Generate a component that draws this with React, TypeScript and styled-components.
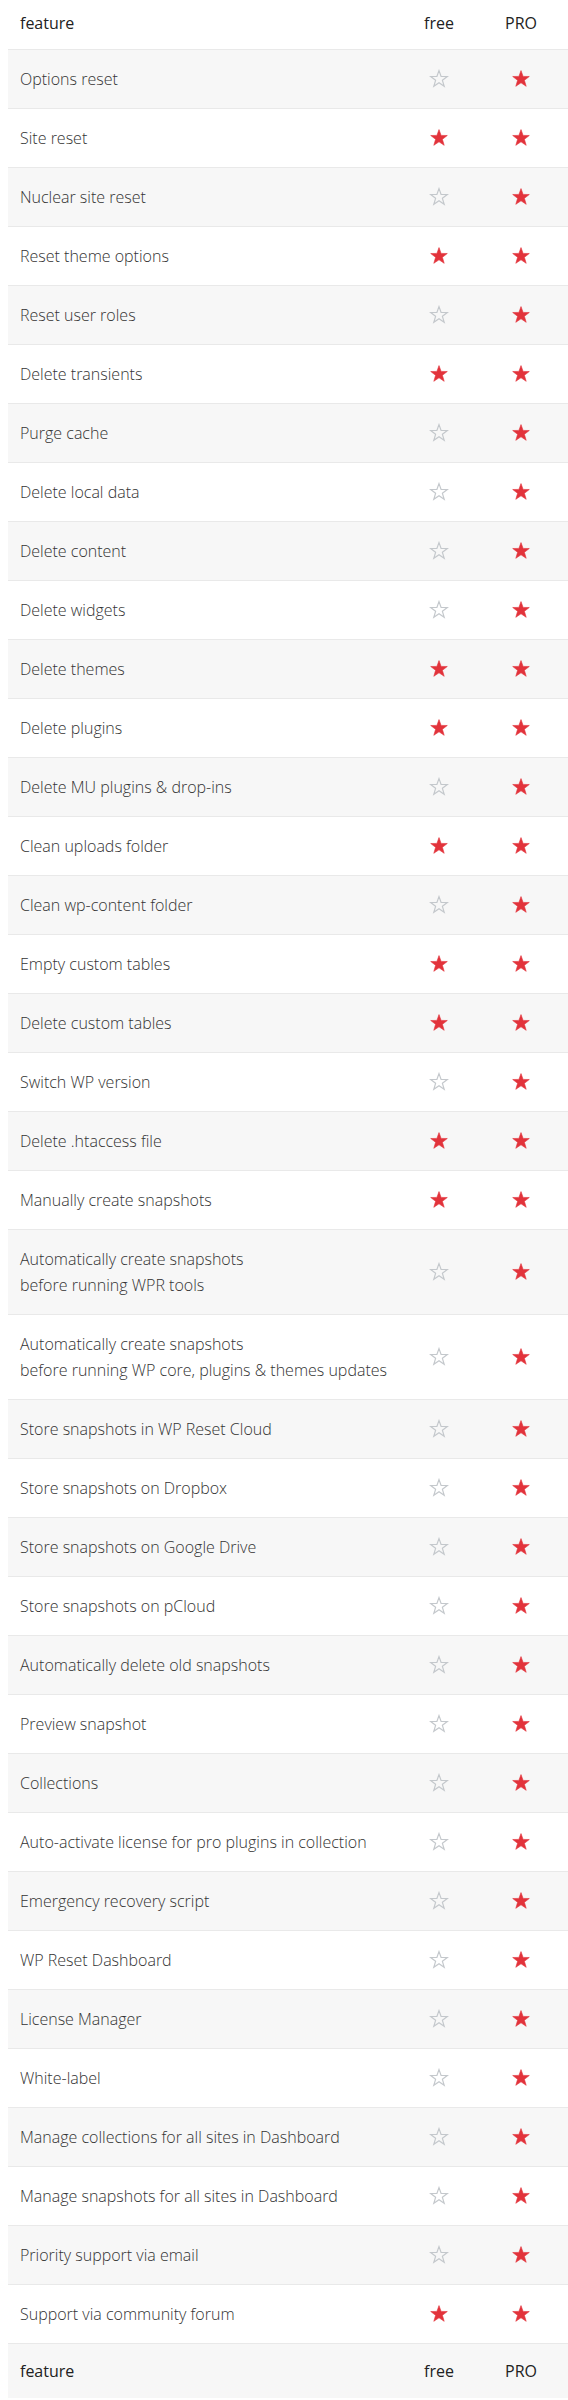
import React from "react";
import styled, { createGlobalStyle } from "styled-components";

const Global = createGlobalStyle`
  html, body { margin: 0; padding: 0; background: #ffffff; }
  body { font-family: "Open Sans", "Liberation Sans", sans-serif; color: #333333; }
`;

const Table = styled.div`
  margin-left: 8px;
  width: 560px;
  display: flex;
  flex-direction: column;
`;

const Row = styled.div<{ $shade?: boolean; $kind?: "head" | "foot" | "body" }>`
  display: grid;
  grid-template-columns: 1fr 82px 82px;
  padding-right: 6px;
  align-items: center;
  background: ${(p) => (p.$shade ? "#f7f7f7" : "#ffffff")};
  border-bottom: ${(p) => (p.$kind === "foot" ? "none" : "1px solid #e9e9e9")};
  padding-top: ${(p) => (p.$kind === "head" ? "10px" : p.$kind === "foot" ? "14px" : "16px")};
  padding-bottom: ${(p) => (p.$kind === "head" ? "13px" : p.$kind === "foot" ? "14px" : "16px")};
`;

const Feature = styled.div<{ $head?: boolean }>`
  padding-left: 12px;
  font-size: 16px;
  line-height: 26px;
  font-weight: ${(p) => (p.$head ? 400 : 300)};
  color: ${(p) => (p.$head ? "#222222" : "#333333")};
`;

const Col = styled.div`
  text-align: center;
  font-size: 16px;
  line-height: 26px;
  color: #222222;
  display: flex;
  justify-content: center;
  align-items: center;
`;

const Star = ({ filled }: { filled: boolean }) => (
  <svg width="20" height="20" viewBox="0 0 20 20" aria-hidden="true">
    <polygon
      points="10,1.6 12.1,7.4 18.3,7.5 13.4,11.3 15.2,17.3 10,13.8 4.8,17.3 6.6,11.3 1.7,7.5 7.9,7.4"
      fill={filled ? "#e2333b" : "none"}
      stroke={filled ? "#e2333b" : "#c4c8cc"}
      strokeWidth={filled ? 0.6 : 1.2}
      strokeLinejoin="miter"
    />
  </svg>
);

type Item = { name: React.ReactNode; free: boolean };

const items: Item[] = [
  { name: "Options reset", free: false },
  { name: "Site reset", free: true },
  { name: "Nuclear site reset", free: false },
  { name: "Reset theme options", free: true },
  { name: "Reset user roles", free: false },
  { name: "Delete transients", free: true },
  { name: "Purge cache", free: false },
  { name: "Delete local data", free: false },
  { name: "Delete content", free: false },
  { name: "Delete widgets", free: false },
  { name: "Delete themes", free: true },
  { name: "Delete plugins", free: true },
  { name: "Delete MU plugins & drop-ins", free: false },
  { name: "Clean uploads folder", free: true },
  { name: "Clean wp-content folder", free: false },
  { name: "Empty custom tables", free: true },
  { name: "Delete custom tables", free: true },
  { name: "Switch WP version", free: false },
  { name: "Delete .htaccess file", free: true },
  { name: "Manually create snapshots", free: true },
  {
    name: (
      <>
        Automatically create snapshots
        <br />
        before running WPR tools
      </>
    ),
    free: false,
  },
  {
    name: (
      <>
        Automatically create snapshots
        <br />
        before running WP core, plugins &amp; themes updates
      </>
    ),
    free: false,
  },
  { name: "Store snapshots in WP Reset Cloud", free: false },
  { name: "Store snapshots on Dropbox", free: false },
  { name: "Store snapshots on Google Drive", free: false },
  { name: "Store snapshots on pCloud", free: false },
  { name: "Automatically delete old snapshots", free: false },
  { name: "Preview snapshot", free: false },
  { name: "Collections", free: false },
  { name: "Auto-activate license for pro plugins in collection", free: false },
  { name: "Emergency recovery script", free: false },
  { name: "WP Reset Dashboard", free: false },
  { name: "License Manager", free: false },
  { name: "White-label", free: false },
  { name: "Manage collections for all sites in Dashboard", free: false },
  { name: "Manage snapshots for all sites in Dashboard", free: false },
  { name: "Priority support via email", free: false },
  { name: "Support via community forum", free: true },
];

export default function App() {
  return (
    <>
      <Global />
      <Table>
        <Row $kind="head">
          <Feature $head>feature</Feature>
          <Col>free</Col>
          <Col>PRO</Col>
        </Row>
        {items.map((it, i) => (
          <Row key={i} $kind="body" $shade={i % 2 === 0}>
            <Feature>{it.name}</Feature>
            <Col>
              <Star filled={it.free} />
            </Col>
            <Col>
              <Star filled />
            </Col>
          </Row>
        ))}
        <Row $kind="foot" $shade>
          <Feature $head>feature</Feature>
          <Col>free</Col>
          <Col>PRO</Col>
        </Row>
      </Table>
    </>
  );
}
